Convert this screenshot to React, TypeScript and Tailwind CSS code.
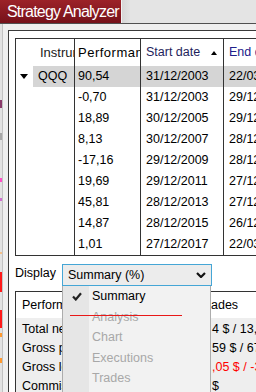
import React from "react";

const rows = [
  { perf: "90,54", start: "31/12/2003", end: "22/03/2019", top: true },
  { perf: "-0,70", start: "31/12/2003", end: "29/12/2005" },
  { perf: "18,89", start: "30/12/2005", end: "29/12/2007" },
  { perf: "8,13", start: "30/12/2007", end: "28/12/2009" },
  { perf: "-17,16", start: "29/12/2009", end: "28/12/2011" },
  { perf: "19,69", start: "29/12/2011", end: "27/12/2013" },
  { perf: "45,81", start: "28/12/2013", end: "27/12/2015" },
  { perf: "14,87", start: "28/12/2015", end: "26/12/2017" },
  { perf: "1,01", start: "27/12/2017", end: "22/03/2019" },
];

const summary = [
  { label: "Total net profit", value: "4 $ / 13,", red: false },
  { label: "Gross profit", value: "59 $ / 67", red: false },
  { label: "Gross loss", value: ",05 $ / -3", red: true },
  { label: "Commission", value: "$", red: false },
];

const menuItems = ["Summary", "Analysis", "Chart", "Executions", "Trades"];

export default function App() {
  return (
    <div className="w-[256px] h-[392px] overflow-hidden flex flex-col bg-[#efefef] text-black font-['Liberation_Sans',Arial,sans-serif]">
      {/* Tab bar */}
      <div className="h-[24px] shrink-0 flex border-b border-[#505050] bg-[#e4e4e4]">
        <div className="w-[121px] h-[23px] bg-gradient-to-b from-[#9c2228] to-[#76111a] text-white text-[16px] leading-[23px] pl-[7px] tracking-[-0.8px] whitespace-nowrap overflow-hidden">
          Strategy Analyzer
        </div>
        <div className="w-[1px] bg-[#f2f2f2]" />
        <div className="w-[8px] bg-gradient-to-r from-[#d6d6d6] to-[#e2e2e2]" />
        <div className="flex-1" />
      </div>

      <div className="flex-1 flex min-h-0">
        {/* left strip (window behind) */}
        <div className="w-[3px] shrink-0 relative bg-[#e2e2e2] border-r border-[#c2c2c2]">
          <div className="absolute left-0 top-[76px] w-[2px] h-[8px] bg-[#8a3a6a]" />
          <div className="absolute left-0 top-[109px] w-[2px] h-[7px] bg-[#a8a8a8]" />
          <div className="absolute left-0 top-[154px] w-[2px] h-[4px] bg-[#ff50c8]" />
          <div className="absolute left-0 top-[174px] w-[2px] h-[3px] bg-[#d070d0]" />
          <div className="absolute left-0 top-[228px] w-[2px] h-[2px] bg-[#f5c08a]" />
          <div className="absolute left-0 top-[248px] w-[2px] h-[20px] bg-[#ff1a1a]" />
          <div className="absolute left-0 top-[286px] w-[2px] h-[18px] bg-[#ff1a1a]" />
          <div className="absolute left-0 top-[309px] w-[2px] h-[4px] bg-[#ff9a30]" />
          <div className="absolute left-0 top-[334px] w-[2px] h-[5px] bg-[#ff9a30]" />
        </div>

        <div className="flex-1 min-w-0 pl-[5px] pt-[6px]">
          <div className="h-full border-t border-l border-[#3a3a3a] bg-white pl-[6px] pt-[7px] overflow-hidden">
            {/* Top table */}
            <div className="w-[289px] border-t border-l border-b border-[#333333]">
              <div className="grid grid-cols-[59px_66px_83px_81px] h-[27px] text-[12px]">
                <div className="border-r border-[#333333] flex items-center pl-[24px] overflow-hidden whitespace-nowrap text-[13px] text-[#1a1a1a]">
                  Instrument
                </div>
                <div className="border-r border-[#333333] flex items-center pl-[3px] overflow-hidden whitespace-nowrap text-[13px] tracking-[0.5px]">
                  Performance
                </div>
                <div className="border-r border-[#333333] flex items-center pl-[5px] pr-[6px] text-[12.5px] text-[#1e1e5c] whitespace-nowrap">
                  <span className="flex-1">Start date</span>
                  <svg width="6" height="4" viewBox="0 0 6 4">
                    <polygon points="3,0 6,4 0,4" fill="#000" />
                  </svg>
                </div>
                <div className="flex items-center pl-[5px] text-[12.5px] text-[#20208a] whitespace-nowrap">End date</div>
              </div>
              {rows.map((r, i) => (
                <div key={i} className="grid grid-cols-[59px_66px_83px_81px] h-[21px] text-[12.5px] whitespace-nowrap">
                  <div className="border-r border-[#333333] flex">
                    {r.top ? (
                      <>
                        <div className="w-[17px] flex items-center pl-[4px]">
                          <svg width="8" height="5" viewBox="0 0 8 5">
                            <polygon points="0,0 8,0 4,5" fill="#000" />
                          </svg>
                        </div>
                        <div className="flex-1 bg-[#d5d5d5] flex items-center pl-[5px]">QQQ</div>
                      </>
                    ) : null}
                  </div>
                  <div className={`border-r border-[#333333] flex items-center pl-[3px] ${r.top ? "bg-[#d5d5d5]" : ""}`}>
                    {r.perf}
                  </div>
                  <div className={`border-r border-[#333333] flex items-center pl-[5px] ${r.top ? "bg-[#d5d5d5]" : ""}`}>
                    {r.start}
                  </div>
                  <div className={`flex items-center pl-[5px] ${r.top ? "bg-[#d5d5d5]" : ""}`}>{r.end}</div>
                </div>
              ))}
            </div>

            {/* Display row */}
            <div className="h-[35px] pt-[8px] flex items-start text-[12.5px]">
              <div className="w-[47px] h-[22px] leading-[18px]">Display</div>
              <div className="relative h-[22px]">
                <div className="w-[150px] h-[22px] border border-[#45a6d6] bg-[#ececec] flex items-center pl-[5px] pr-[5px]">
                  <span className="flex-1">Summary (%)</span>
                  <svg width="10" height="6" viewBox="0 0 10 6">
                    <polyline points="1,1 5,5 9,1" fill="none" stroke="#111" strokeWidth="2.2" />
                  </svg>
                </div>
                {/* Dropdown menu */}
                <div className="absolute top-full left-0 z-10 w-[149px] h-[110px] bg-[#f2f2f2] border-l border-r border-[#acacac] flex">
                  <div className="w-[26px] shrink-0 bg-[#e6e6e6] pl-[9px] pt-[6px]">
                    <svg width="10" height="9" viewBox="0 0 10 9">
                      <polyline points="1,4.5 3.8,7.5 9,1.2" fill="none" stroke="#222" strokeWidth="2.2" />
                    </svg>
                  </div>
                  <div className="flex-1 flex flex-col pl-[3px]">
                    {menuItems.map((m, i) => (
                      <div
                        key={m}
                        className={`h-[20.6px] flex items-center text-[12.5px] ${i === 0 ? "text-black" : "text-[#a8a8a8]"}`}
                      >
                        {m}
                      </div>
                    ))}
                  </div>
                  <div className="absolute left-[7px] top-[29px] w-[112px] h-[1px] bg-[#e81818]" />
                </div>
              </div>
            </div>

            {/* Bottom table */}
            <div className="w-[289px] border-t border-l border-[#333333] text-[12.5px] whitespace-nowrap">
              <div className="h-[26px] flex items-center bg-white">
                <div className="w-[195px] pl-[6px] overflow-hidden">Performance</div>
                <div>ades</div>
              </div>
              <div className="bg-[#eeeeee] pt-[2px] h-[120px]">
                {summary.map((s) => (
                  <div key={s.label} className="h-[19px] flex items-center">
                    <div className="w-[195px] pl-[6px] overflow-hidden">{s.label}</div>
                    <div className={`pl-[1px] ${s.red ? "text-[#ff0000]" : ""}`}>{s.value}</div>
                  </div>
                ))}
              </div>
            </div>
          </div>
        </div>
      </div>
    </div>
  );
}
